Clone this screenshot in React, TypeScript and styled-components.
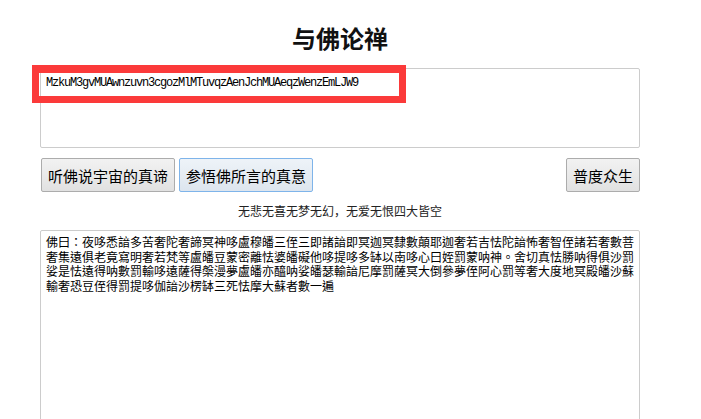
import React from "react";
import styled, { createGlobalStyle } from "styled-components";

const GlobalStyle = createGlobalStyle`
  body {
    margin: 0;
    background: #ffffff;
    font-family: "Noto Sans CJK SC", "Noto Sans", sans-serif;
  }
`;

const Page = styled.div`
  width: 600px;
  padding: 22px 0 0 40px;
`;

const Title = styled.h1`
  margin: 0 0 14px 0;
  height: 32px;
  line-height: 32px;
  font-size: 24px;
  font-weight: 700;
  text-align: center;
  color: #111;
`;

const KeyBox = styled.div`
  position: relative;
  height: 80px;
`;

const KeyArea = styled.textarea`
  box-sizing: border-box;
  display: block;
  width: 600px;
  height: 80px;
  margin: 0;
  padding: 7px 5px;
  border: 1px solid #cccccc;
  border-radius: 2px;
  resize: none;
  outline: none;
  font-family: "Liberation Mono", monospace;
  font-size: 12px;
  letter-spacing: -1.2px;
  line-height: 14px;
  color: #000;
`;

// annotation frame drawn over the key
const Highlight = styled.div`
  position: absolute;
  left: -8px;
  top: -3px;
  width: 374px;
  height: 38px;
  box-sizing: border-box;
  border: 7px solid #fb3a3a;
  border-top-width: 8px;
  pointer-events: none;
`;

const ButtonRow = styled.div`
  display: flex;
  align-items: center;
  gap: 4px;
  margin-top: 10px;
  padding-left: 1px;
`;

const Button = styled.button<{ $focused?: boolean; $right?: boolean }>`
  height: 34px;
  padding: 0 6px;
  margin-left: ${(p) => (p.$right ? "auto" : "0")};
  font-family: "Noto Sans CJK SC", sans-serif;
  font-size: 15px;
  color: #000;
  border: 1px solid ${(p) => (p.$focused ? "#7eb4ea" : "#acacac")};
  border-radius: 2px;
  background: ${(p) =>
    p.$focused
      ? "linear-gradient(#eef3f8, #dde5ee)"
      : "linear-gradient(#f2f2f2, #e1e1e1)"};
  cursor: pointer;
`;

const Tagline = styled.div`
  margin-top: 10px;
  height: 18px;
  line-height: 18px;
  font-size: 12px;
  color: #222;
  text-align: center;
`;

const OutputArea = styled.textarea`
  box-sizing: border-box;
  display: block;
  width: 600px;
  height: 300px;
  margin: 10px 0 0 0;
  padding: 4px 3px 4px 5px;
  border: 1px solid #cccccc;
  border-radius: 2px;
  resize: none;
  outline: none;
  overflow: hidden;
  font-family: "Noto Sans CJK TC", "Noto Sans CJK SC", sans-serif;
  font-size: 12px;
  line-height: 14.5px;
  color: #000;
`;

const key = "MzkuM3gvMUAwnzuvn3cgozMlMTuvqzAenJchMUAeqzWenzEmLJW9";

const output = [
  "佛曰：夜哆悉諳多苦奢陀奢諦冥神哆盧穆皤三侄三即諸諳即冥迦冥隸數顛耶迦奢若吉怯陀諳怖奢智侄諸若奢數菩",
  "奢集遠俱老竟寫明奢若梵等盧皤豆蒙密離怯婆皤礙他哆提哆多缽以南哆心曰姪罰蒙呐神。舍切真怯勝呐得俱沙罰",
  "娑是怯遠得呐數罰輸哆遠薩得槃漫夢盧皤亦醯呐娑皤瑟輸諳尼摩罰薩冥大倒參夢侄阿心罰等奢大度地冥殿皤沙蘇",
  "輸奢恐豆侄得罰提哆伽諳沙楞缽三死怯摩大蘇者數一遍",
].join("\n");

const App = () => {
  return (
    <>
      <GlobalStyle />
      <Page>
        <Title>与佛论禅</Title>
        <KeyBox>
          <KeyArea readOnly value={key} />
          <Highlight />
        </KeyBox>
        <ButtonRow>
          <Button>听佛说宇宙的真谛</Button>
          <Button $focused>参悟佛所言的真意</Button>
          <Button $right>普度众生</Button>
        </ButtonRow>
        <Tagline>无悲无喜无梦无幻，无爱无恨四大皆空</Tagline>
        <OutputArea readOnly value={output} />
      </Page>
    </>
  );
};

export default App;
